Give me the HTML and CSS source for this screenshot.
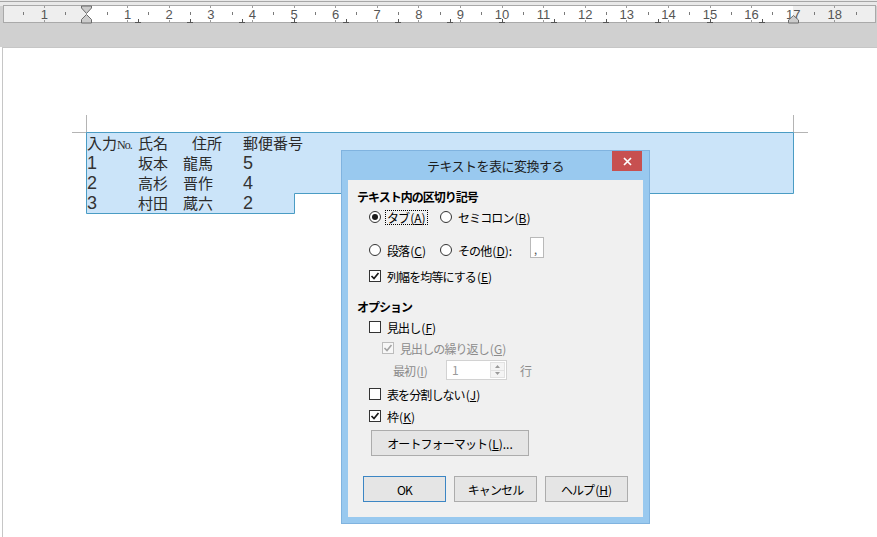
FILE: index.html
```html
<!DOCTYPE html>
<html lang="ja">
<head>
<meta charset="utf-8">
<title>テキストを表に変換する</title>
<link rel="stylesheet" href="styles.css">
</head>
<body>
<header class="ruler-area">
<svg class="ruler" width="877" height="47" viewBox="0 0 877 47">
  <rect x="0" y="0" width="877" height="47" fill="#d0d0d0"/>
  <rect x="0" y="0" width="877" height="6" fill="#e9e9e9"/>
  <line x1="0" y1="1.5" x2="877" y2="1.5" stroke="#a6a6a6"/>
  <rect x="3.5" y="5.5" width="872" height="17" fill="#ffffff" stroke="#a9a9a9"/>
  <rect x="4" y="6" width="82" height="16" fill="#eeeeee"/>
  <rect x="793" y="6" width="82" height="16" fill="#eeeeee"/>
  <path stroke="#7a7a7a" stroke-width="1" d="M23.5 12v3M65.5 12v3M107.5 12v3M148.5 12v3M190.5 12v3M232.5 12v3M273.5 12v3M315.5 12v3M356.5 12v3M398.5 12v3M440.5 12v3M481.5 12v3M523.5 12v3M564.5 12v3M606.5 12v3M648.5 12v3M689.5 12v3M731.5 12v3M772.5 12v3M814.5 12v3M856.5 12v3"/>
  <path stroke="#9a9a9a" stroke-width="1" d="M44.5 6v2M44.5 20v2M127.5 6v2M127.5 20v2M169.5 6v2M169.5 20v2M210.5 6v2M210.5 20v2M252.5 6v2M252.5 20v2M294.5 6v2M294.5 20v2M335.5 6v2M335.5 20v2M377.5 6v2M377.5 20v2M418.5 6v2M418.5 20v2M460.5 6v2M460.5 20v2M502.5 6v2M502.5 20v2M543.5 6v2M543.5 20v2M585.5 6v2M585.5 20v2M626.5 6v2M626.5 20v2M668.5 6v2M668.5 20v2M710.5 6v2M710.5 20v2M751.5 6v2M751.5 20v2M834.5 6v2M834.5 20v2"/>
  <path stroke="#555555" stroke-width="1" d="M138.5 19v4M135 22.5h6M190.5 19v4M187 22.5h6M242.5 19v4M239 22.5h6M294.5 19v4M291 22.5h6M346.5 19v4M343 22.5h6M398.5 19v4M395 22.5h6M450.5 19v4M447 22.5h6M502.5 19v4M499 22.5h6M554.5 19v4M551 22.5h6M606.5 19v4M603 22.5h6M658.5 19v4M655 22.5h6M710.5 19v4M707 22.5h6M762.5 19v4M759 22.5h6"/>
  <g class="ruler-num" text-anchor="middle">
    <text x="44.4" y="19">1</text>
    <text x="127.6" y="19">1</text>
    <text x="169.2" y="19">2</text>
    <text x="210.8" y="19">3</text>
    <text x="252.4" y="19">4</text>
    <text x="294" y="19">5</text>
    <text x="335.6" y="19">6</text>
    <text x="377.2" y="19">7</text>
    <text x="418.8" y="19">8</text>
    <text x="460.4" y="19">9</text>
    <text x="502" y="19">10</text>
    <text x="543.6" y="19">11</text>
    <text x="585.2" y="19">12</text>
    <text x="626.8" y="19">13</text>
    <text x="668.4" y="19">14</text>
    <text x="710" y="19">15</text>
    <text x="751.6" y="19">16</text>
    <text x="793.2" y="19">17</text>
    <text x="834.8" y="19">18</text>
  </g>
  <polygon points="81.5,6 91.5,6 91.5,8 86.5,13.5 81.5,8" fill="#cccccc" stroke="#6b6b6b"/>
  <polygon points="86.5,14.5 91.5,19.5 91.5,23 81.5,23 81.5,19.5" fill="#cccccc" stroke="#6b6b6b"/>
  <polygon points="793.5,15.5 798.5,20 798.5,23 788.5,23 788.5,20" fill="#cccccc" stroke="#6b6b6b"/>
</svg>
</header>

<main class="page">
  <svg class="selection" width="874" height="489" viewBox="0 0 874 489">
    <path d="M83.5 67v17M790.5 67v17M69 84.5h736" stroke="#b4b4b4" fill="none"/>
    <polygon points="83.5,84.5 790.5,84.5 790.5,145.5 291.5,145.5 291.5,165.5 83.5,165.5" fill="#cbe4f9" stroke="#4a9cc4"/>
  </svg>
  <div class="doc">
    <div class="doc-row"><span>入力<span class="no">No.</span></span><span>氏名</span><span class="pad9">住所</span><span>郵便番号</span></div>
    <div class="doc-row"><span class="num">1</span><span>坂本</span><span>龍馬</span><span class="num">5</span></div>
    <div class="doc-row"><span class="num">2</span><span>高杉</span><span>晋作</span><span class="num">4</span></div>
    <div class="doc-row"><span class="num">3</span><span>村田</span><span>蔵六</span><span class="num">2</span></div>
  </div>
</main>

<section class="dialog" role="dialog" aria-label="テキストを表に変換する">
  <div class="titlebar">
    <span class="title">テキストを表に変換する</span>
    <span class="close"><svg width="9" height="9" viewBox="0 0 9 9"><path d="M1 1L8 8M8 1L1 8" stroke="#fff" stroke-width="1.7"/></svg></span>
  </div>
  <div class="panel">
    <div class="heading">テキスト内の区切り記号</div>
    <div class="row indent mt2">
      <label class="choice w71"><span class="radio checked"></span><span class="focus">タブ<span class="acc">(<u>A</u>)</span></span></label>
      <label class="choice"><span class="radio"></span><span>セミコロン<span class="acc">(<u>B</u>)</span></span></label>
    </div>
    <div class="row indent mt13">
      <label class="choice w71"><span class="radio"></span><span>段落<span class="acc">(<u>C</u>)</span></span></label>
      <label class="choice w90"><span class="radio"></span><span>その他<span class="acc">(<u>D</u>):</span></span></label>
      <span class="sepbox">,</span>
    </div>
    <div class="row indent mt6 choice">
      <span class="check"><svg width="10" height="10" viewBox="0 0 10 10"><path d="M1.5 5L4 7.5L8.5 2" fill="none" stroke="#1a1a1a" stroke-width="1.7"/></svg></span>
      <span>列幅を均等にする<span class="acc">(<u>E</u>)</span></span>
    </div>
    <div class="heading mt13">オプション</div>
    <div class="row indent mt2 choice">
      <span class="check"></span><span>見出し<span class="acc">(<u>F</u>)</span></span>
    </div>
    <div class="row indent2 mt1 choice disabled">
      <span class="check"><svg width="10" height="10" viewBox="0 0 10 10"><path d="M1.5 5L4 7.5L8.5 2" fill="none" stroke="#a3a3a3" stroke-width="1.6"/></svg></span>
      <span>見出しの繰り返し<span class="acc">(<u>G</u>)</span></span>
    </div>
    <div class="row indent3 mt2 disabled">
      <span class="first-label">最初<span class="acc">(<u>I</u>)</span></span>
      <span class="spin">
        <span class="spin-val">1</span>
        <span class="spin-btns">
          <span class="spin-btn"><svg width="5" height="3" viewBox="0 0 5 3"><path d="M0 3L2.5 0L5 3Z" fill="#9a9a9a"/></svg></span>
          <span class="spin-btn"><svg width="5" height="3" viewBox="0 0 5 3"><path d="M0 0L5 0L2.5 3Z" fill="#9a9a9a"/></svg></span>
        </span>
      </span>
      <span class="unit">行</span>
    </div>
    <div class="row indent mt4 choice">
      <span class="check"></span><span>表を分割しない<span class="acc">(<u>J</u>)</span></span>
    </div>
    <div class="row indent mt2 choice">
      <span class="check"><svg width="10" height="10" viewBox="0 0 10 10"><path d="M1.5 5L4 7.5L8.5 2" fill="none" stroke="#1a1a1a" stroke-width="1.7"/></svg></span>
      <span>枠<span class="acc">(<u>K</u>)</span></span>
    </div>
    <button class="btn autoformat" type="button">オートフォーマット<span class="acc">(<u>L</u>)...</span></button>
    <div class="footer">
      <button class="btn default" type="button">OK</button>
      <button class="btn" type="button">キャンセル</button>
      <button class="btn" type="button">ヘルプ<span class="acc">(<u>H</u>)</span></button>
    </div>
  </div>
</section>
</body>
</html>
```

FILE: styles.css
```css
* { box-sizing: border-box; }
html, body { margin: 0; padding: 0; }
body {
  width: 877px;
  height: 537px;
  overflow: hidden;
  background: #ffffff;
  position: relative;
  font-family: "Noto Sans CJK JP", "Liberation Sans", sans-serif;
}

.ruler-area { height: 47px; }
.ruler { display: block; }
.ruler-num {
  font-family: "Liberation Sans", "DejaVu Sans", sans-serif;
  font-size: 13px;
  fill: #555555;
}

.page {
  margin-left: 2px;
  height: 490px;
  border-left: 1px solid #c6c6c6;
  border-top: 1px solid #c6c6c6;
  background: #ffffff;
  position: relative;
}
.selection { position: absolute; left: 0; top: 0; }

.doc {
  position: relative;
  padding: 85px 0 0 84px;
  font-family: "Noto Sans CJK JP", sans-serif;
  font-size: 15px;
  color: #2a2a2a;
}
.doc-row {
  display: grid;
  grid-template-columns: 51px 45px 60px auto;
  height: 20px;
  line-height: 20px;
  white-space: nowrap;
}
.no {
  font-family: "Liberation Serif", serif;
  font-size: 12px;
  letter-spacing: -1px;
}
.num {
  font-family: "Liberation Sans Narrow", "Liberation Sans", sans-serif;
  font-size: 18px;
  line-height: 20px;
  color: #333333;
}
.pad9 { padding-left: 9px; }

/* dialog */
.dialog {
  position: absolute;
  left: 341px;
  top: 150px;
  width: 309px;
  height: 374px;
  background: #99c9ef;
  border: 1px solid #80b3df;
  padding: 0 6px 6px;
  font-size: 12px;
  letter-spacing: -0.9px;
  color: #000000;
}
.acc {
  letter-spacing: 0;
  margin-left: 1px;
}
.titlebar {
  height: 29px;
  position: relative;
  text-align: center;
  line-height: 29px;
  font-size: 13px;
  letter-spacing: -0.5px;
  color: #1c1c1c;
}
.close {
  position: absolute;
  top: 0;
  right: 1px;
  width: 30px;
  height: 20px;
  background: #c75050;
  display: flex;
  align-items: center;
  justify-content: center;
}
.close svg { display: block; }

.panel {
  height: 337px;
  background: #f0f0f0;
  padding: 9px 0 0 9px;
  display: flex;
  flex-direction: column;
  align-items: flex-start;
}
.heading {
  height: 16px;
  line-height: 16px;
  font-weight: bold;
  letter-spacing: -1px;
}
.row {
  display: flex;
  align-items: center;
  height: 20px;
  white-space: nowrap;
}
.indent { margin-left: 12px; }
.indent2 { margin-left: 25px; }
.indent3 { margin-left: 36px; }
.mt1 { margin-top: 1px; }
.mt2 { margin-top: 2px; }
.mt4 { margin-top: 4px; }
.mt6 { margin-top: 6px; }
.mt13 { margin-top: 13px; }

.choice { display: flex; align-items: center; gap: 6px; }
.w71 { width: 71px; }
.w90 { width: 90px; }

.radio {
  width: 12px;
  height: 12px;
  border: 1px solid #333333;
  border-radius: 50%;
  background: #ffffff;
  flex: none;
  position: relative;
}
.radio.checked::after {
  content: "";
  position: absolute;
  left: 2px;
  top: 2px;
  width: 6px;
  height: 6px;
  border-radius: 50%;
  background: #1a1a1a;
}
.focus {
  border: 1px dotted #000000;
  padding: 0 1px;
  margin-left: -2px;
  line-height: 13px;
}

.check {
  width: 12px;
  height: 12px;
  border: 1px solid #333333;
  background: #ffffff;
  flex: none;
  display: flex;
  align-items: center;
  justify-content: center;
}
.check svg { display: block; }

.sepbox {
  align-self: flex-start;
  margin-top: -3px;
  width: 14px;
  height: 21px;
  border: 1px solid #b9b9b9;
  background: #ffffff;
  font-size: 11px;
  line-height: 22px;
  padding-left: 3px;
  color: #555555;
}

.disabled { color: #8c8c8c; }
.disabled .check { border-color: #bcbcbc; background: #f7f7f7; }

.first-label { width: 53px; }
.spin {
  width: 61px;
  height: 20px;
  border: 1px solid #d2d2d2;
  background: #ffffff;
  display: flex;
}
.spin-val {
  flex: 1;
  padding-left: 5px;
  line-height: 18px;
  color: #9a9a9a;
}
.spin-btns {
  width: 15px;
  margin: 1px;
  display: flex;
  flex-direction: column;
  border: 1px solid #e2e2e2;
  background: #f4f4f4;
}
.spin-btn {
  flex: 1;
  display: flex;
  align-items: center;
  justify-content: center;
}
.spin-btn + .spin-btn { border-top: 1px solid #e2e2e2; }
.spin-btn svg { display: block; }
.unit { margin-left: 13px; }

.btn {
  font-family: inherit;
  font-size: 12px;
  letter-spacing: -0.9px;
  color: #000000;
  background: #e5e5e5;
  border: 1px solid #acacac;
  border-radius: 0;
  height: 26px;
  padding: 0;
  margin: 0;
}
.autoformat {
  margin-top: 4px;
  margin-left: 14px;
  width: 158px;
}
.footer {
  margin-top: 20px;
  margin-left: 6px;
  display: flex;
  gap: 8px;
}
.footer .btn { width: 83px; }
.btn.default { border-color: #3c86c4; }
```
